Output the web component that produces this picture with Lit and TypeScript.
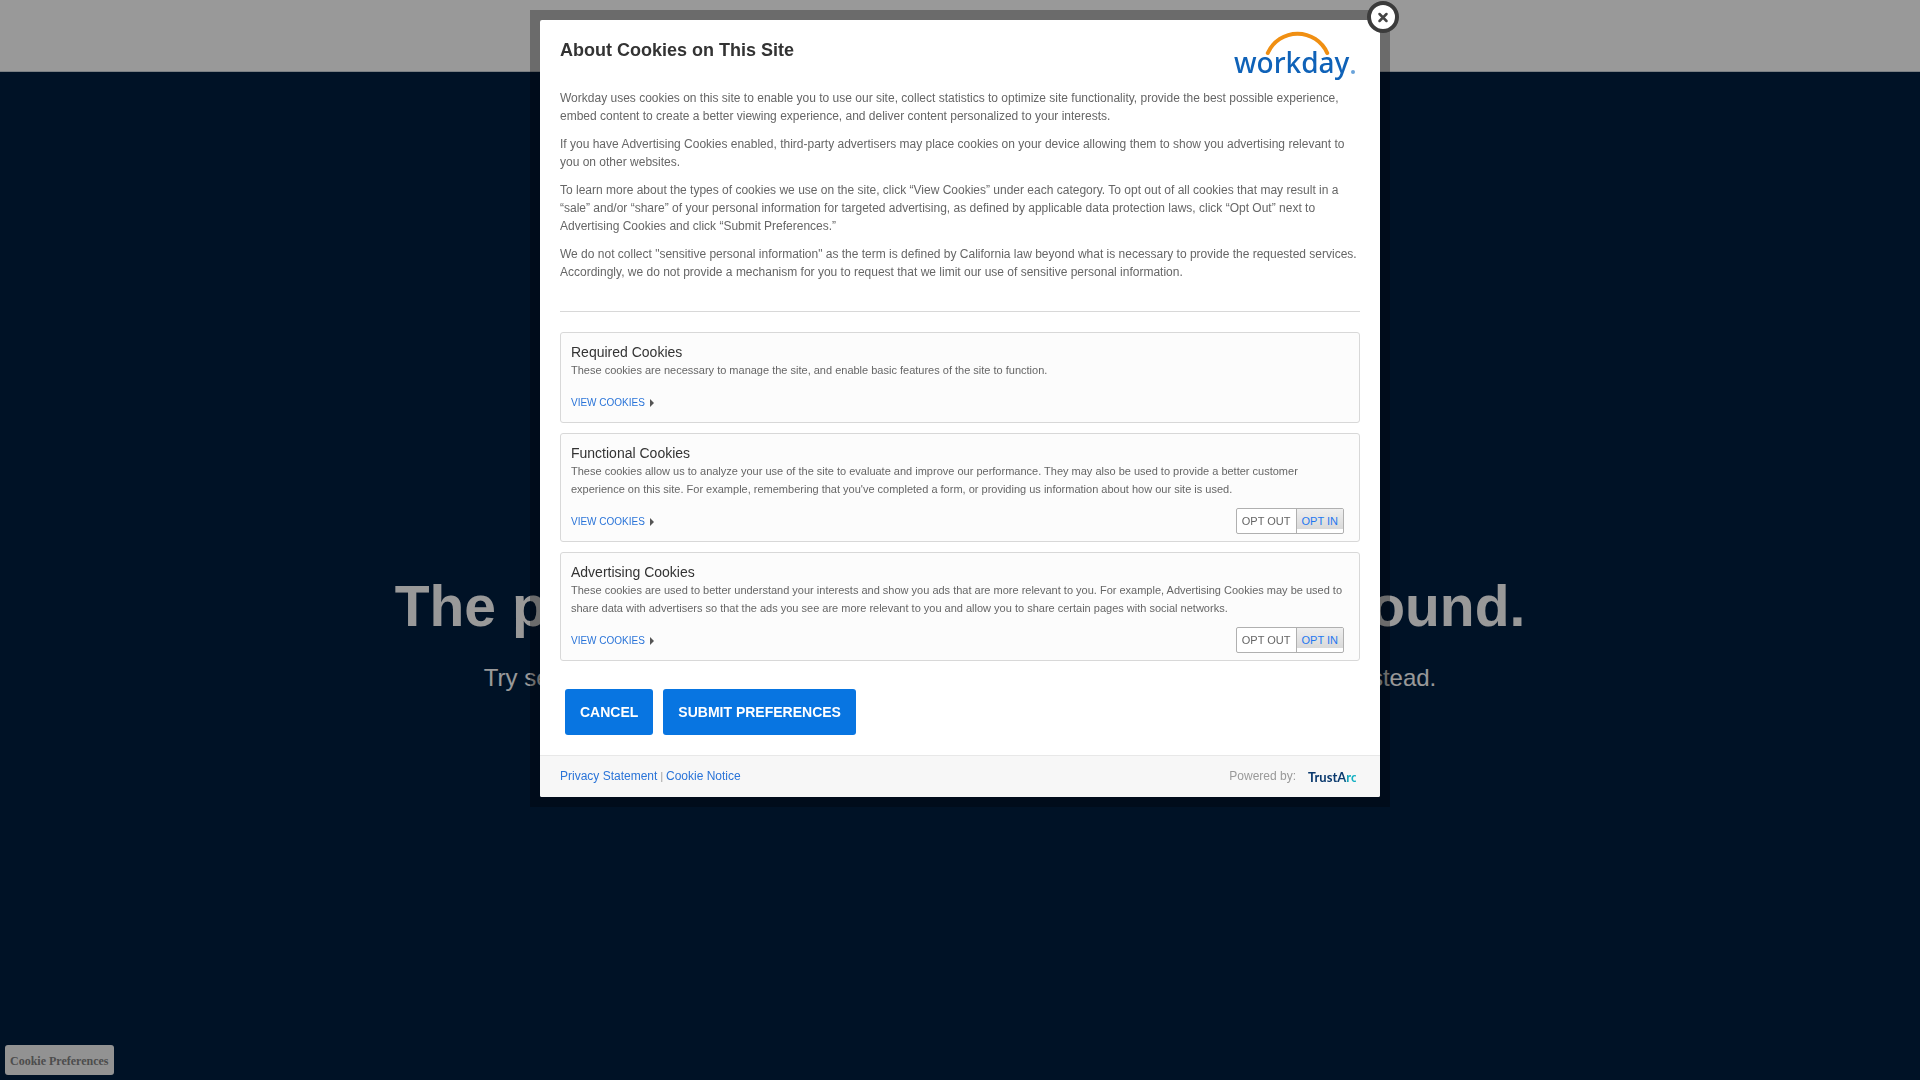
import { LitElement, html, css } from "lit";
import { customElement, property } from "lit/decorators.js";

@customElement("cookie-category")
class CookieCategory extends LitElement {
  @property() name = "";
  @property() description = "";
  @property() key = "";
  @property({ type: Boolean }) optional = false;

  static styles = css`
    :host { display: block; }
    .card {
      border: 1px solid #d8d8d8;
      border-radius: 3px;
      background: #fcfcfc;
      padding: 10px 15px 7px 10px;
    }
    .name { margin: 0; font-size: 14px; line-height: 18px; font-weight: 400; color: #333; }
    .description { margin: 0; font-size: 11px; line-height: 18px; color: #666; }
    .actions {
      display: flex;
      align-items: center;
      justify-content: space-between;
      height: 26px;
      margin-top: 10px;
    }
    .view {
      display: flex;
      align-items: center;
      gap: 5px;
      padding: 2px 0 0;
      border: 0;
      background: none;
      font: 10px/18px "Liberation Sans", Arial, sans-serif;
      text-transform: uppercase;
      color: #2a74d8;
      cursor: pointer;
    }
    .arrow {
      border-left: 4px solid #555;
      border-top: 4px solid transparent;
      border-bottom: 4px solid transparent;
    }
    .toggle {
      display: flex;
      margin: 0;
      padding: 0;
      border: 1px solid #b0b0b0;
      border-radius: 2px;
      background: #fff;
    }
    .option {
      position: relative;
      display: flex;
      padding-bottom: 4px;
      font-size: 11px;
      line-height: 20px;
      color: #666;
      cursor: pointer;
    }
    .option + .option { border-left: 1px solid #b0b0b0; }
    .option input { position: absolute; opacity: 0; margin: 0; width: 1px; height: 1px; }
    .face { padding: 2px 5px 0; height: 18px; line-height: 21px; }
    .option input:checked + .face {
      color: #1f78f0;
      background: linear-gradient(#efefef, #d9d9d9);
    }
  `;

  render() {
    return html`
      <section class="card">
        <h3 class="name">${this.name}</h3>
        <p class="description">${this.description}</p>
        <div class="actions">
          <button class="view" type="button">View Cookies <span class="arrow"></span></button>
          ${this.optional
            ? html`<fieldset class="toggle" aria-label=${this.name}>
                <label class="option"><input type="radio" name=${this.key} value="out" /><span class="face">OPT OUT</span></label>
                <label class="option"><input type="radio" name=${this.key} value="in" checked /><span class="face">OPT IN</span></label>
              </fieldset>`
            : null}
        </div>
      </section>
    `;
  }
}

@customElement("app-root")
class AppRoot extends LitElement {
  private categories = [
    {
      key: "required",
      name: "Required Cookies",
      description: "These cookies are necessary to manage the site, and enable basic features of the site to function.",
      optional: false,
    },
    {
      key: "functional",
      name: "Functional Cookies",
      description:
        "These cookies allow us to analyze your use of the site to evaluate and improve our performance. They may also be used to provide a better customer experience on this site. For example, remembering that you've completed a form, or providing us information about how our site is used.",
      optional: true,
    },
    {
      key: "advertising",
      name: "Advertising Cookies",
      description:
        "These cookies are used to better understand your interests and show you ads that are more relevant to you. For example, Advertising Cookies may be used to share data with advertisers so that the ads you see are more relevant to you and allow you to share certain pages with social networks.",
      optional: true,
    },
  ];

  static styles = css`
    :host {
      display: block;
      font-family: "Liberation Sans", Arial, sans-serif;
    }
    .page {
      display: flex;
      flex-direction: column;
      min-height: 100vh;
      background: #001e40;
    }
    .bar { height: 71px; background: #fff; border-bottom: 1px solid #ccd4dc; }
    .hero {
      flex: 1;
      display: flex;
      flex-direction: column;
      align-items: center;
      padding-top: 500px;
      text-align: center;
      color: #fff;
    }
    .headline { margin: 0; font-size: 57px; line-height: 68px; font-weight: 700; }
    .lead { margin: 20px 0 0; font-size: 24px; line-height: 36px; }
    .preferences {
      position: fixed;
      left: 5px;
      bottom: 5px;
      height: 30px;
      padding: 2px 5px 0;
      border: 0;
      border-radius: 3px;
      background: #f4f4f4;
      font: bold 12px "Liberation Serif", serif;
      color: #808080;
    }
    .overlay {
      position: fixed;
      inset: 0;
      display: flex;
      justify-content: center;
      align-items: flex-start;
      padding-top: 10px;
      background: rgba(0, 0, 0, 0.4);
    }
    .frame {
      position: relative;
      width: 100%;
      max-width: 840px;
      padding: 10px;
      background: rgba(0, 0, 0, 0.3);
    }
    .close {
      position: absolute;
      top: -9px;
      right: -9px;
      width: 32px;
      height: 32px;
      padding: 0;
      border: 0;
      background: none;
      cursor: pointer;
    }
    .close svg, .logo svg { display: block; }
    .dialog { background: #fff; border-radius: 2px; overflow: hidden; }
    .content { padding: 0 20px 20px; }
    .top {
      display: flex;
      justify-content: space-between;
      align-items: flex-start;
      height: 69px;
    }
    .title { margin: 0; padding-top: 20px; font-size: 18px; line-height: 20px; color: #333; }
    .copy {
      display: flex;
      flex-direction: column;
      gap: 10px;
      padding-bottom: 30px;
      border-bottom: 1px solid #d8d8d8;
      font-size: 12px;
      line-height: 18px;
      color: #666;
    }
    .copy p { margin: 0; }
    .categories { display: flex; flex-direction: column; gap: 10px; padding-top: 20px; }
    .buttons { display: flex; gap: 10px; padding: 28px 5px 0; }
    .primary {
      height: 46px;
      padding: 0 15px;
      border: 0;
      border-radius: 3px;
      background: #0875e1;
      font: bold 14px "Liberation Sans", Arial, sans-serif;
      color: #fff;
      cursor: pointer;
    }
    .footer {
      display: flex;
      justify-content: space-between;
      align-items: center;
      height: 39px;
      padding: 0 24px 2px 20px;
      border-top: 1px solid #e8e8e8;
      background: #f7f7f7;
      font-size: 12px;
      color: #999;
    }
    .footer a { color: #2a74d8; text-decoration: none; }
    .divider { font-size: 10px; padding: 0 3px; }
    .powered { display: flex; align-items: center; gap: 12px; }
  `;

  render() {
    return html`
      <div class="page">
        <header class="bar"></header>
        <main class="hero">
          <h1 class="headline">The page you requested cannot be found.</h1>
          <p class="lead">Try searching for what you need or go back to our Workday homepage to explore instead.</p>
        </main>
        <button class="preferences" type="button">Cookie Preferences</button>
      </div>
      <div class="overlay">
        <div class="frame" role="dialog" aria-modal="true" aria-labelledby="title">
          <div class="dialog">
            <div class="content">
              <div class="top">
                <h2 class="title" id="title">About Cookies on This Site</h2>
                <div class="logo">
                  <svg width="126" height="64" viewBox="0 0 126 64" role="img" aria-label="Workday">
                    <path d="M33.800 33 A32.500 32.500 0 0 1 93.200 33" fill="none" stroke="#f08f12" stroke-width="4" stroke-linecap="round" />
                    <text x="0" y="53" font-family="Noto Sans, sans-serif" font-size="28" font-weight="500" fill="#0f62b8">workday</text>
                    <circle cx="119" cy="52" r="2" fill="#6aa3da" />
                  </svg>
                </div>
              </div>
              <div class="copy">
                <p>Workday uses cookies on this site to enable you to use our site, collect statistics to optimize site functionality, provide the best possible experience, embed content to create a better viewing experience, and deliver content personalized to your interests.</p>
                <p>If you have Advertising Cookies enabled, third-party advertisers may place cookies on your device allowing them to show you advertising relevant to you on other websites.</p>
                <p>To learn more about the types of cookies we use on the site, click “View Cookies” under each category. To opt out of all cookies that may result in a “sale” and/or “share” of your personal information for targeted advertising, as defined by applicable data protection laws, click “Opt Out” next to Advertising Cookies and click “Submit Preferences.”</p>
                <p>We do not collect "sensitive personal information" as the term is defined by California law beyond what is necessary to provide the requested services. Accordingly, we do not provide a mechanism for you to request that we limit our use of sensitive personal information.</p>
              </div>
              <div class="categories">
                ${this.categories.map(
                  (c) => html`<cookie-category .key=${c.key} .name=${c.name} .description=${c.description} .optional=${c.optional}></cookie-category>`
                )}
              </div>
              <div class="buttons">
                <button class="primary" type="button">CANCEL</button>
                <button class="primary" type="button">SUBMIT PREFERENCES</button>
              </div>
            </div>
            <footer class="footer">
              <nav><a href="#privacy">Privacy Statement</a><span class="divider">|</span><a href="#notice">Cookie Notice</a></nav>
              <div class="powered">
                <span>Powered by:</span>
                <svg width="48" height="16" viewBox="0 0 48 16" role="img" aria-label="TrustArc">
                  <defs>
                    <linearGradient id="arc" gradientUnits="userSpaceOnUse" x1="0" y1="0" x2="48" y2="0">
                      <stop offset="0.74" stop-color="#0b3a6e" />
                      <stop offset="0.84" stop-color="#14b0c2" />
                    </linearGradient>
                  </defs>
                  <text x="0" y="14" font-family="Lato, sans-serif" font-size="13" font-weight="700" fill="url(#arc)">TrustArc</text>
                </svg>
              </div>
            </footer>
          </div>
          <button class="close" type="button" aria-label="Close">
            <svg width="32" height="32" viewBox="0 0 32 32">
              <circle cx="16" cy="16" r="14" fill="#fff" stroke="#3b3b3b" stroke-width="4" />
              <path d="M12.500 13 L19.500 20 M19.500 13 L12.500 20" stroke="#444" stroke-width="2.500" stroke-linecap="round" />
            </svg>
          </button>
        </div>
      </div>
    `;
  }
}
